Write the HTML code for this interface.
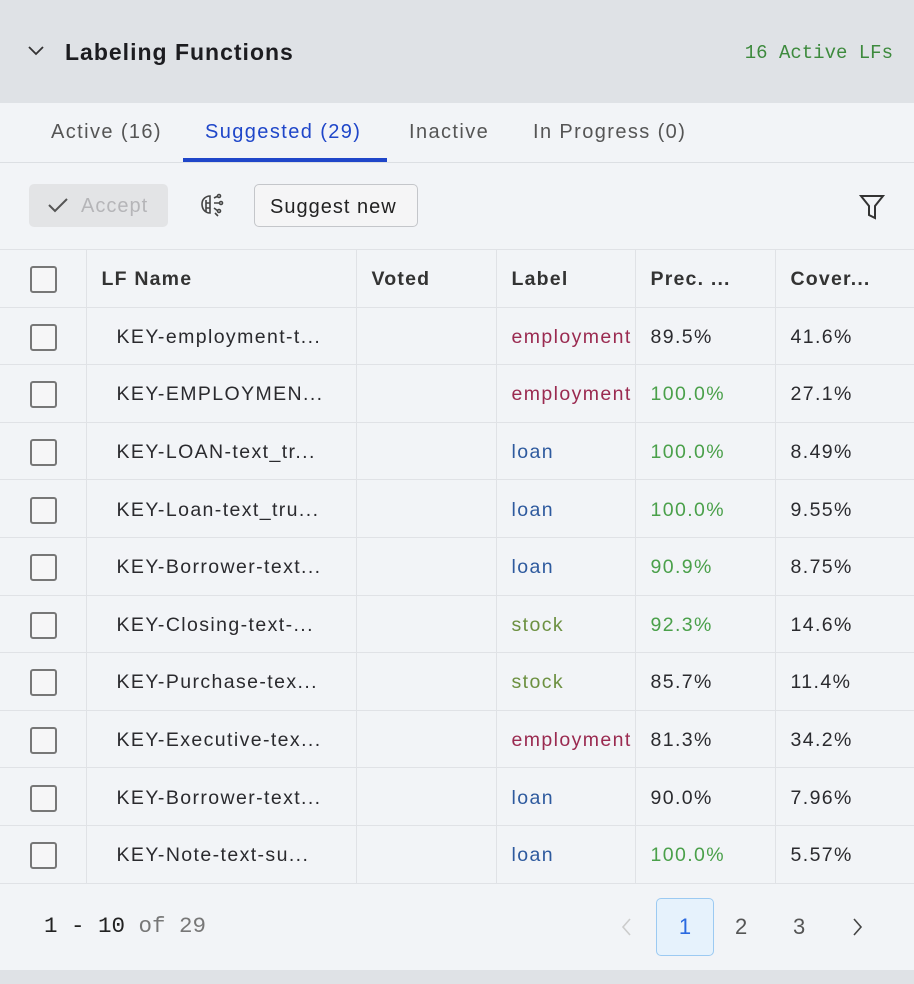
<!DOCTYPE html><html><head><style>
*{box-sizing:border-box;margin:0;padding:0}
body{width:914px;height:984px;background:#f2f4f7;font-family:"Liberation Sans",sans-serif;color:#2a2a2e;position:relative;overflow:hidden;letter-spacing:1.4px}
.hdr{position:absolute;left:0;top:0;width:914px;height:103px;background:#dfe2e6}
.hdr .t{position:absolute;left:65px;top:39px;font-size:23px;font-weight:bold;color:#1c1c20;letter-spacing:1px}
.hdr .r{position:absolute;right:21px;top:42px;font-family:"Liberation Mono",monospace;font-size:19px;color:#3d8a3d;letter-spacing:0}
.tabs{position:absolute;top:103px;left:0;width:914px;height:60px;border-bottom:1px solid #dcdfe3}
.tab{position:absolute;top:18px;font-size:20px;color:#555}
.tb{position:absolute;top:184px}
table{position:absolute;top:249px;left:0;width:914px;border-collapse:collapse;table-layout:fixed}
td,th{border:1px solid #e0e2e6;height:57.6px;font-size:19.5px;text-align:left;padding:3px 0 0 15px;font-weight:normal;white-space:nowrap;overflow:hidden}
th{font-weight:bold;color:#333;letter-spacing:1.2px}
td:nth-child(2){padding-left:30px}
td:first-child,th:first-child{border-left:none;padding-left:30px}
td:last-child,th:last-child{border-right:none}
.cb{display:inline-block;width:27px;height:27px;border:2px solid #777;border-radius:3px;vertical-align:middle;background:#f6f6f7}
.e{color:#9a2a50}.l{color:#2e5a9e}.s{color:#6c9040}.g{color:#4aa04a}
.ft{position:absolute;top:913px;left:44px;font-family:"Liberation Mono",monospace;font-size:22.5px;color:#222;letter-spacing:0}
.bot{position:absolute;left:0;top:970px;width:914px;height:14px;background:#dfe2e6}
.pg{position:absolute;top:914px;font-size:22px;color:#555}
</style></head><body>
<div class="hdr">
<svg style="position:absolute;left:27px;top:43px" width="18" height="14"><path d="M2 4l7 7 7-7" stroke="#333" stroke-width="1.8" fill="none"/></svg>
<div class="t">Labeling Functions</div><div class="r">16 Active LFs</div></div>
<div class="tabs">
<div class="tab" style="left:51px">Active (16)</div>
<div class="tab" style="left:205px;color:#1f46c9">Suggested (29)</div>
<div class="tab" style="left:409px">Inactive</div>
<div class="tab" style="left:533px">In Progress (0)</div>
<div style="position:absolute;left:183px;top:55px;width:204px;height:4px;background:#1f46c9"></div>
</div>
<div class="tb" style="left:29px;width:139px;height:43px;background:#e3e4e6;border-radius:5px;color:#b5b5b8;font-size:20px;padding:11px 0 0 52px;letter-spacing:1px">Accept
<svg style="position:absolute;left:18px;top:13px" width="22" height="16"><path d="M2 8l6 6 12-12" stroke="#555" stroke-width="2" fill="none"/></svg></div>
<svg class="tb" style="left:198px;top:193px" width="28" height="28" fill="none" stroke="#444" stroke-width="1.6"><path d="M12 3c-4 0-8 3-8 8s3 9 8 9zM8 7v12M12 10H8M12 15H8M16 5l4-2M16 10h6M16 15l4 3M17 20l3 3"/><circle cx="21" cy="3" r="1.5"/><circle cx="23" cy="10" r="1.5"/><circle cx="21" cy="18" r="1.5"/></svg>
<div class="tb" style="left:254px;width:164px;height:43px;border:1px solid #c4c6ca;border-radius:5px;background:#f5f5f6;font-size:20px;padding:11px 0 0 15px;color:#222;letter-spacing:1px">Suggest new</div>
<svg style="position:absolute;left:858px;top:193px" width="30" height="28" fill="none" stroke="#333" stroke-width="2"><path d="M3 3h22l-8 10v12l-6 -3v-9z"/></svg>
<table>
<tr><th style="width:86px"><span class="cb"></span></th><th style="width:270px">LF Name</th><th style="width:140px">Voted</th><th style="width:139px">Label</th><th style="width:140px">Prec. ...</th><th>Cover...</th></tr>
<tr><td><span class="cb"></span></td><td>KEY-employment-t...</td><td></td><td class="e">employment</td><td>89.5%</td><td>41.6%</td></tr>
<tr><td><span class="cb"></span></td><td>KEY-EMPLOYMEN...</td><td></td><td class="e">employment</td><td class="g">100.0%</td><td>27.1%</td></tr>
<tr><td><span class="cb"></span></td><td>KEY-LOAN-text_tr...</td><td></td><td class="l">loan</td><td class="g">100.0%</td><td>8.49%</td></tr>
<tr><td><span class="cb"></span></td><td>KEY-Loan-text_tru...</td><td></td><td class="l">loan</td><td class="g">100.0%</td><td>9.55%</td></tr>
<tr><td><span class="cb"></span></td><td>KEY-Borrower-text...</td><td></td><td class="l">loan</td><td class="g">90.9%</td><td>8.75%</td></tr>
<tr><td><span class="cb"></span></td><td>KEY-Closing-text-...</td><td></td><td class="s">stock</td><td class="g">92.3%</td><td>14.6%</td></tr>
<tr><td><span class="cb"></span></td><td>KEY-Purchase-tex...</td><td></td><td class="s">stock</td><td>85.7%</td><td>11.4%</td></tr>
<tr><td><span class="cb"></span></td><td>KEY-Executive-tex...</td><td></td><td class="e">employment</td><td>81.3%</td><td>34.2%</td></tr>
<tr><td><span class="cb"></span></td><td>KEY-Borrower-text...</td><td></td><td class="l">loan</td><td>90.0%</td><td>7.96%</td></tr>
<tr><td><span class="cb"></span></td><td>KEY-Note-text-su...</td><td></td><td class="l">loan</td><td class="g">100.0%</td><td>5.57%</td></tr>
</table>
<div class="ft">1 - 10 <span style="color:#777">of 29</span></div>
<svg style="position:absolute;left:620px;top:917px" width="14" height="20"><path d="M10 2l-7 8 7 8" stroke="#ccc" stroke-width="1.6" fill="none"/></svg>
<div style="position:absolute;left:656px;top:898px;width:58px;height:58px;border:1px solid #9ccaf2;border-radius:5px;background:#e6f2fc;color:#2a6ae0;font-size:22px;text-align:center;line-height:56px;letter-spacing:0">1</div>
<div class="pg" style="left:735px">2</div><div class="pg" style="left:793px">3</div>
<svg style="position:absolute;left:850px;top:917px" width="14" height="20"><path d="M4 2l7 8-7 8" stroke="#444" stroke-width="1.6" fill="none"/></svg>
<div class="bot"></div>
</body></html>
